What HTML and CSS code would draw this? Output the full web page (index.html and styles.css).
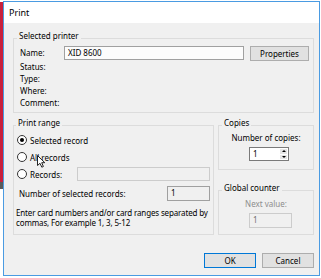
FILE: index.html
```html
<!DOCTYPE html>
<html lang="en">
<head>
  <meta charset="UTF-8">
  <title>Print</title>
  <link rel="stylesheet" href="styles.css">
</head>
<body>
  <div class="screen">
    <div class="desk"></div>
    <div class="window">
      <div class="titlebar">Print</div>
      <div class="client">
        <fieldset class="group printer">
          <legend>Selected printer</legend>
          <div class="name-row">
            <span class="lbl">Name:</span>
            <div class="field name-field">XID 8600</div>
            <button class="btn props">Properties</button>
          </div>
          <div class="info">Status:</div>
          <div class="info">Type:</div>
          <div class="info">Where:</div>
          <div class="info">Comment:</div>
        </fieldset>

        <div class="middle">
          <fieldset class="group range">
            <legend>Print range</legend>
            <div class="opt"><span class="radio checked"></span>Selected record</div>
            <div class="opt cursor-row">
              <span class="radio"></span>All records
              <!-- mouse pointer from the screenshot -->
              <svg class="cursor" width="9" height="13" viewBox="0 0 9 13">
                <path d="M0.5 0.5 L0.5 10.5 L3 8.3 L4.8 12.2 L6.4 11.5 L4.7 7.7 L7.8 7.7 Z" fill="#fff" stroke="#222" stroke-width="1"/>
              </svg>
            </div>
            <div class="opt"><span class="radio"></span>Records:<div class="field disabled records-field"></div></div>
            <div class="count-row">
              <span>Number of selected records:</span>
              <div class="field readonly count-field">1</div>
            </div>
            <div class="note">Enter card numbers and/or card ranges separated by commas, For example 1, 3, 5-12</div>
          </fieldset>

          <div class="side">
            <fieldset class="group copies">
              <legend>Copies</legend>
              <div class="caption">Number of copies:</div>
              <div class="spin">
                <div class="spin-val">1</div>
                <div class="spin-arrows">
                  <span class="up"></span>
                  <span class="down"></span>
                </div>
              </div>
            </fieldset>
            <fieldset class="group counter">
              <legend>Global counter</legend>
              <div class="caption muted">Next value:</div>
              <div class="field disabled counter-field">1</div>
            </fieldset>
          </div>
        </div>

        <div class="actions">
          <button class="btn default">OK</button>
          <button class="btn">Cancel</button>
        </div>
      </div>
    </div>
  </div>
</body>
</html>
```

FILE: styles.css
```css
* {
  box-sizing: border-box;
}
body {
  margin: 0;
  background: #fff;
  font-family: "Noto Sans", "Open Sans", sans-serif;
  font-size: 8px;
  color: #000;
}
.screen {
  display: flex;
  align-items: flex-start;
}
.desk {
  width: 3px;
  height: 187px;
  margin-top: 2px;
  background: #c8203c;
  border-bottom: 7px solid #5a5a5a;
}
.window {
  width: 317px;
  height: 275px;
  margin-top: 1px;
  border: 1px solid #4a9be2;
  display: flex;
  flex-direction: column;
}
.titlebar {
  height: 21px;
  line-height: 21px;
  padding-left: 5px;
  background: #fff;
  font-size: 9px;
}
.client {
  flex: 1;
  background: #f0f0f0;
  padding: 8px 5px 0 9px;
}
.group {
  margin: 0;
  min-width: 0;
  border: 1px solid #dcdcdc;
  padding: 0;
}
.group legend {
  padding: 0 2px 5px;
  line-height: 10px;
}
.field {
  height: 14px;
  border: 1px solid #a0a0a0;
  background: #fff;
  padding-left: 3px;
  line-height: 12px;
}
.field.disabled {
  background: #f0f0f0;
  border-color: #cccccc;
  color: #6d6d6d;
}
.field.readonly {
  background: #f0f0f0;
  border-color: #a0a0a0;
}
.btn {
  height: 15px;
  padding: 0;
  border: 1px solid #adadad;
  background: #e1e1e1;
  font: inherit;
  line-height: 13px;
  color: #000;
}
.btn.default {
  border-color: #0078d7;
}

/* selected printer */
.printer {
  padding: 0 4px 3px 6px;
}
.printer legend {
  margin-left: -3px;
}
.name-row {
  display: flex;
  height: 15px;
  line-height: 14px;
}
.lbl {
  width: 44px;
}
.name-field {
  width: 180px;
  background: #fcfcfc;
}
.props {
  width: 59px;
  margin-left: 6px;
}
.info {
  line-height: 12px;
}

/* print range, copies, counter */
.middle {
  display: flex;
  gap: 4px;
  margin-top: 5px;
}
.range {
  width: 201px;
  padding: 0 3px 6px 3px;
}
.range legend {
  margin-left: -1px;
}
.opt {
  display: flex;
  align-items: center;
  height: 14px;
}
.opt + .opt {
  margin-top: 3px;
}
.radio {
  width: 10px;
  height: 10px;
  margin-right: 3px;
  border: 1px solid #333;
  border-radius: 50%;
  background: #fff;
  display: flex;
  align-items: center;
  justify-content: center;
}
.radio.checked::after {
  content: "";
  width: 4px;
  height: 4px;
  border-radius: 50%;
  background: #000;
}
.cursor-row {
  position: relative;
}
.cursor {
  position: absolute;
  left: 20px;
  top: 5px;
}
.records-field {
  width: 133px;
  margin-left: auto;
}
.count-row {
  display: flex;
  align-items: center;
  height: 15px;
  margin-top: 5px;
  padding-left: 2px;
}
.count-field {
  width: 43px;
  height: 15px;
  margin-left: auto;
}
.note {
  margin: 7px -3px 0 -1px;
  line-height: 10px;
  letter-spacing: -0.15px;
}
.side {
  width: 96px;
  display: flex;
  flex-direction: column;
}
.copies {
  padding: 0 0 8px;
}
.copies legend,
.counter legend {
  margin-left: 3px;
}
.caption {
  text-align: center;
  line-height: 10px;
}
.caption.muted {
  color: #8d8d8d;
  margin-top: 1px;
}
.spin {
  display: flex;
  width: 40px;
  height: 14px;
  margin: 4px 0 0 30px;
  border: 1px solid #7a7a7a;
  background: #fff;
}
.spin-val {
  flex: 1;
  padding-left: 3px;
  line-height: 12px;
}
.spin-arrows {
  width: 9px;
  display: flex;
  flex-direction: column;
  gap: 1px;
  padding: 1px;
}
.spin-arrows span {
  flex: 1;
  background: #e6e6e6;
  display: flex;
  align-items: center;
  justify-content: center;
}
.spin-arrows .up::after {
  content: "";
  border-left: 2px solid transparent;
  border-right: 2px solid transparent;
  border-bottom: 2px solid #000;
}
.spin-arrows .down::after {
  content: "";
  border-left: 2px solid transparent;
  border-right: 2px solid transparent;
  border-top: 2px solid #000;
}
.counter {
  margin-top: 13px;
  padding: 0 0 6px;
}
.counter-field {
  width: 43px;
  height: 15px;
  margin: 4px 0 0 30px;
}
.actions {
  display: flex;
  justify-content: flex-end;
  gap: 6px;
  margin-top: 18px;
}
.actions .btn {
  width: 52px;
}
```
